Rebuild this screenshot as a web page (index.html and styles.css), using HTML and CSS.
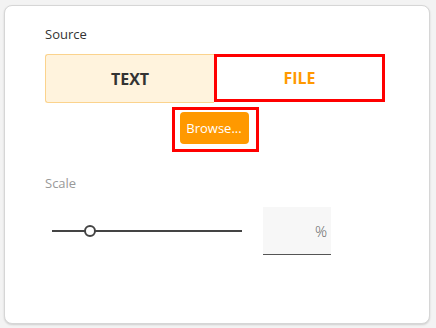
FILE: index.html
```html
<!DOCTYPE html>
<html>
<head>
<meta charset="utf-8">
<link rel="stylesheet" href="styles.css">
</head>
<body>
<div class="card">
  <div class="label">Source</div>
  <div class="seg">
    <div class="seg-btn seg-text">TEXT</div>
    <div class="seg-btn seg-file">FILE</div>
  </div>
  <div class="browse-row">
    <div class="browse-frame"><button class="browse">Browse...</button></div>
  </div>
  <div class="label label-muted">Scale</div>
  <div class="scale-row">
    <div class="slider">
      <div class="track"></div>
      <div class="thumb"></div>
    </div>
    <div class="pct"><span>%</span></div>
  </div>
</div>
</body>
</html>
```
FILE: styles.css
```css
html, body {
  margin: 0;
  padding: 0;
  background: #f3f3f3;
  font-family: "Open Sans", "Noto Sans", sans-serif;
}
body {
  padding: 5px 6px 4px 4px;
  width: 436px;
  height: 328px;
  box-sizing: border-box;
}
.card {
  box-sizing: border-box;
  width: 426px;
  height: 319px;
  background: #fff;
  border: 1px solid #d6d6d6;
  border-radius: 8px;
  box-shadow: 0 1px 2px rgba(0,0,0,0.15);
  padding: 19px 44px 0 40px;
}
.label {
  font-size: 13px;
  color: #333;
  line-height: 18px;
  height: 18px;
}
.label-muted {
  color: #999;
  margin-top: 22px;
}
.seg {
  display: flex;
  margin-top: 11px;
  width: 340px;
  height: 49px;
}
.seg-btn {
  display: flex;
  align-items: center;
  justify-content: center;
  font-weight: 700;
  font-size: 16px;
  box-sizing: border-box;
}
.seg-text {
  width: 169px;
  background: #fff3dd;
  border: 1px solid #fbd38d;
  border-right: none;
  border-radius: 3px 0 0 3px;
  color: #333;
}
.seg-file {
  width: 171px;
  height: 48px;
  border: 3px solid #ff0000;
  color: #ff9900;
}
.browse-row {
  display: flex;
  justify-content: center;
  width: 340px;
  margin-top: 4px;
}
.browse-frame {
  box-sizing: border-box;
  width: 87px;
  height: 45px;
  border: 3px solid #ff0000;
  padding: 2px 0 0 5px;
}
.browse {
  display: block;
  width: 69px;
  height: 32px;
  border: none;
  border-radius: 4px;
  background: #ff9900;
  color: #fff;
  font-family: "Open Sans", "Noto Sans", sans-serif;
  font-size: 13px;
  padding: 0;
}
.scale-row {
  display: flex;
  align-items: center;
  margin-top: 15px;
}
.slider {
  position: relative;
  width: 190px;
  height: 48px;
  margin-left: 7px;
}
.track {
  position: absolute;
  left: 0;
  right: 0;
  top: 23px;
  height: 2px;
  background: #444;
}
.thumb {
  position: absolute;
  left: 32px;
  top: 18px;
  width: 8px;
  height: 8px;
  border: 2px solid #444;
  border-radius: 50%;
  background: #fff;
}
.pct {
  box-sizing: border-box;
  margin-left: 21px;
  width: 68px;
  height: 48px;
  background: #f7f7f7;
  border-bottom: 1px solid #555;
  display: flex;
  align-items: center;
  justify-content: flex-end;
  padding-right: 4px;
  font-size: 15px;
  font-weight: 300;
  color: #666;
}
```
